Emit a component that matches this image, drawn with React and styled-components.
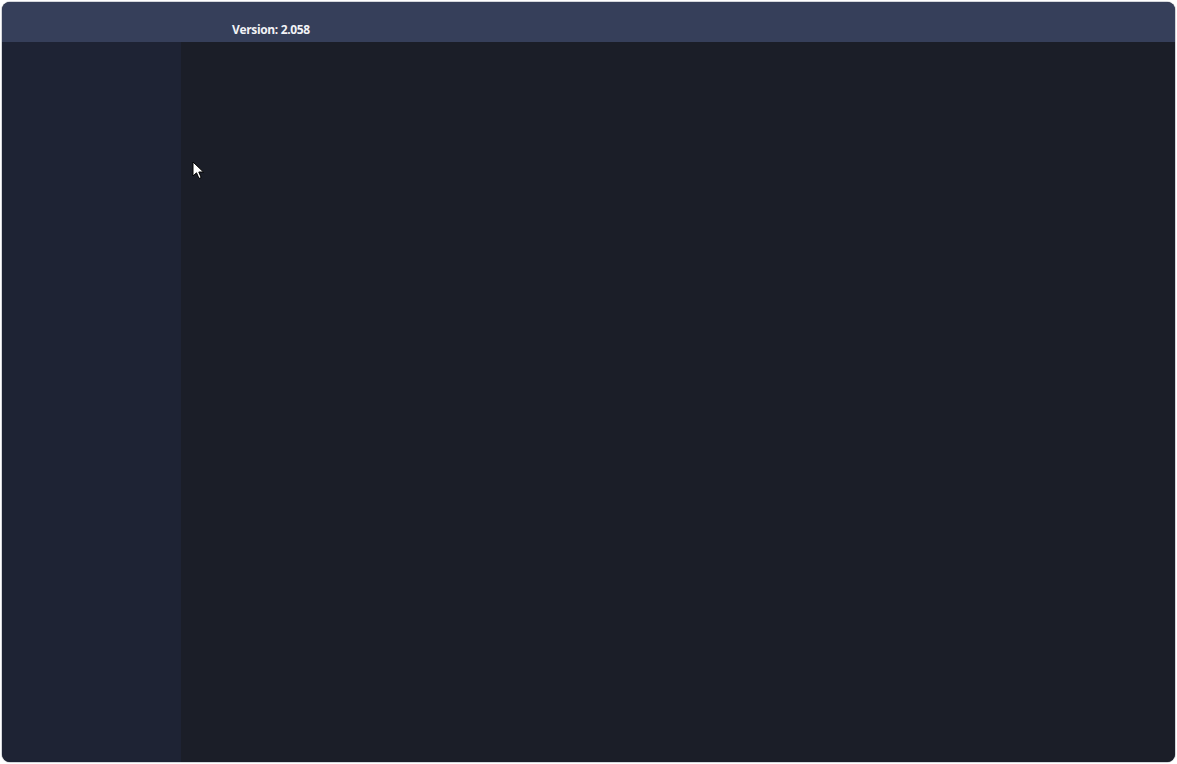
import React from 'react'
import styled, { createGlobalStyle } from 'styled-components';

const GlobalStyle = createGlobalStyle`
  html, body {
    margin: 0;
    padding: 0;
    background: #ffffff;
    width: 100%;
    height: 100%;
  }
  #root {
    height: 100%;
  }
`;

const Page = styled.div`
  height: 764px;
  padding: 2px;
  box-sizing: border-box;
`;

const Window = styled.div`
  position: relative;
  height: 100%;
  width: 1173px;
  border-radius: 8px;
  overflow: hidden;
  display: flex;
  flex-direction: column;
  background: #1b1e28;
  box-shadow: 0 0 0 1px #d4d6db;
`;

const TitleBar = styled.div`
  height: 40px;
  flex: none;
  background: #363f5a;
  display: flex;
  align-items: flex-start;
  padding-left: 230px;
  padding-top: 20px;
  box-sizing: border-box;
`;

const Version = styled.span`
  font-family: "Open Sans", "Noto Sans", sans-serif;
  font-weight: 700;
  font-size: 12px;
  line-height: 16px;
  color: #f2f3f6;
  letter-spacing: -0.35px;
`;

const Body = styled.div`
  flex: 1;
  display: flex;
`;

const Sidebar = styled.aside`
  width: 179px;
  flex: none;
  background: #1e2334;
`;

const Main = styled.main`
  flex: 1;
  background: #1b1e28;
`;

const Cursor = styled.svg`
  position: absolute;
  left: 190px;
  top: 159px;
`;

export default function App() {
  return (
    <Page>
      <GlobalStyle />
      <Window>
        <TitleBar>
          <Version>Version: 2.058</Version>
        </TitleBar>
        <Body>
          <Sidebar />
          <Main />
        </Body>
        <Cursor width="14" height="20" viewBox="0 0 14 20">
          <path d="M1 1 L1 15 L4.5 11.8 L7 17.5 L9.2 16.5 L6.8 11 L11.5 11 Z" fill="#fff" stroke="#000" strokeWidth="1" />
        </Cursor>
      </Window>
    </Page>
  )
}
